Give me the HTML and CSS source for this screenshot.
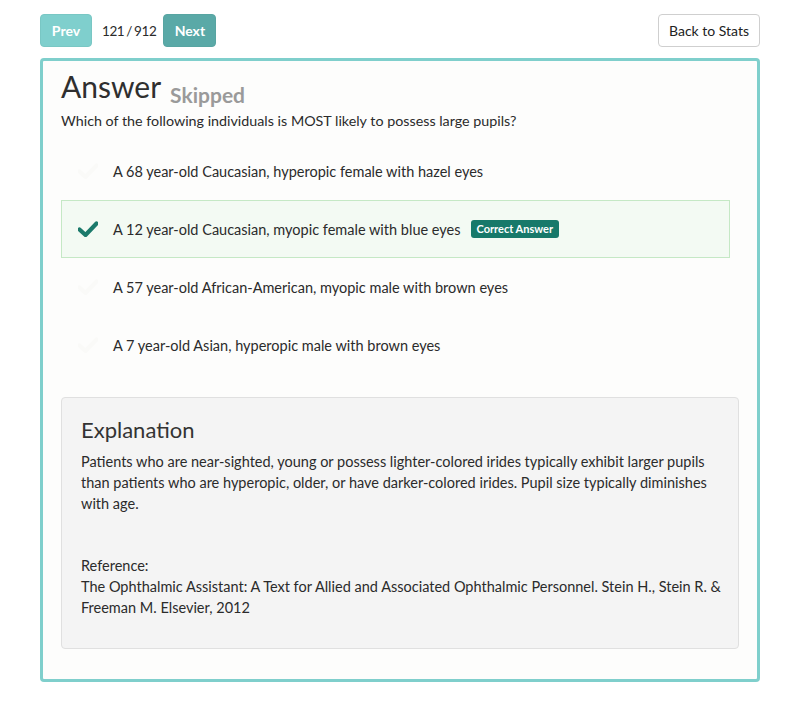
FILE: index.html
```html
<!DOCTYPE html>
<html>
<head>
<meta charset="utf-8">
<link rel="stylesheet" href="styles.css">
</head>
<body>
<div class="page">
  <div class="toolbar">
    <div class="nav">
      <button class="btn btn-teal btn-disabled">Prev</button>
      <span class="counter">121 / 912</span>
      <button class="btn btn-teal">Next</button>
    </div>
    <button class="btn btn-default">Back to Stats</button>
  </div>
  <div class="panel">
    <div class="title-row">
      <h1 class="title">Answer</h1>
      <span class="status">Skipped</span>
    </div>
    <p class="question">Which of the following individuals is MOST likely to possess large pupils?</p>
    <ul class="options">
      <li class="option">
        <svg class="check faint" viewBox="0 0 20 16"><path d="M1.5 8.5 L7.5 14 L18.5 2.5" fill="none" stroke="currentColor" stroke-width="4.2" stroke-linecap="round" stroke-linejoin="round"/></svg>
        <span>A 68 year-old Caucasian, hyperopic female with hazel eyes</span>
      </li>
      <li class="option correct">
        <svg class="check" viewBox="0 0 20 16"><path d="M1.5 8.5 L7.5 14 L18.5 2.5" fill="none" stroke="currentColor" stroke-width="4.2" stroke-linecap="round" stroke-linejoin="round"/></svg>
        <span>A 12 year-old Caucasian, myopic female with blue eyes</span>
        <span class="badge">Correct Answer</span>
      </li>
      <li class="option">
        <svg class="check faint" viewBox="0 0 20 16"><path d="M1.5 8.5 L7.5 14 L18.5 2.5" fill="none" stroke="currentColor" stroke-width="4.2" stroke-linecap="round" stroke-linejoin="round"/></svg>
        <span>A 57 year-old African-American, myopic male with brown eyes</span>
      </li>
      <li class="option">
        <svg class="check faint" viewBox="0 0 20 16"><path d="M1.5 8.5 L7.5 14 L18.5 2.5" fill="none" stroke="currentColor" stroke-width="4.2" stroke-linecap="round" stroke-linejoin="round"/></svg>
        <span>A 7 year-old Asian, hyperopic male with brown eyes</span>
      </li>
    </ul>
    <div class="explanation">
      <h2 class="exp-title">Explanation</h2>
      <p class="exp-text">Patients who are near-sighted, young or possess lighter-colored irides typically exhibit larger pupils than patients who are hyperopic, older, or have darker-colored irides. Pupil size typically diminishes with age.</p>
      <p class="exp-ref">Reference:<br>The Ophthalmic Assistant: A Text for Allied and Associated Ophthalmic Personnel. Stein H., Stein R. &amp; Freeman M. Elsevier, 2012</p>
    </div>
  </div>
</div>
</body>
</html>
```
FILE: styles.css
```css
* { box-sizing: border-box; }
html, body { margin: 0; padding: 0; background: #ffffff; }
body {
  font-family: "Lato", "Open Sans", sans-serif;
  color: #2b2b2b;
  font-size: 14.5px;
}
.page {
  padding: 14px 40px 24px 40px;
}
.toolbar {
  display: flex;
  justify-content: space-between;
  align-items: center;
  height: 33px;
}
.nav {
  display: flex;
  align-items: center;
}
.btn {
  font-family: inherit;
  font-size: 14px;
  height: 33px;
  border-radius: 4px;
  padding: 0 12px;
  cursor: pointer;
}
.btn-teal {
  background: #5aa9a7;
  border: 1px solid #58a5a2;
  color: #fff;
  font-weight: 700;
  width: 53px;
  padding: 0;
}
.btn-disabled {
  background: #7fcfcd;
  border-color: #79c7c4;
  width: 52px;
}
.counter {
  margin: 0 7px 0 10px;
  color: #2b2b2b;
  font-size: 13.5px;
  word-spacing: -1px;
  letter-spacing: -0.4px;
}
.btn-default {
  background: #fff;
  border: 1px solid #cfcfcf;
  color: #222;
  width: 102px;
  padding: 0;
}
.panel {
  margin-top: 11px;
  border: 3px solid #7fcfcc;
  border-radius: 4px;
  background: #fdfdfc;
  padding: 5px 18px 31px 18px;
  height: 624px;
}
.title-row {
  display: flex;
  align-items: baseline;
}
.title {
  margin: 0;
  font-size: 30px;
  font-weight: 400;
  color: #2f2f2f;
  line-height: 40px;
}
.status {
  margin-left: 9px;
  font-size: 21px;
  font-weight: 700;
  color: #9a9a9a;
  position: relative;
  top: 5px;
}
.question {
  margin: 5px 0 0 0;
  line-height: 20px;
  color: #2b2b2b;
  font-size: 14.3px;
}
.options {
  list-style: none;
  margin: 11px 0 0 0;
  padding: 0;
  width: 669px;
}
.option {
  display: flex;
  align-items: center;
  height: 58px;
  padding-left: 16px;
  border: 1px solid transparent;
  color: #2b2b2b;
}
.option.correct {
  background: #f3faf3;
  border-color: #c5e8c5;
}
.check {
  width: 20px;
  height: 16px;
  color: #1b7a6b;
  margin-right: 15px;
  flex: none;
}
.check.faint {
  color: #fafaf8;
}
.badge {
  margin-left: 10px;
  background: #17796a;
  color: #fff;
  font-size: 11px;
  font-weight: 700;
  padding: 2px 6px;
  border-radius: 3px;
  line-height: 14px;
}
.explanation {
  margin-top: 23px;
  background: #f4f4f4;
  border: 1px solid #e0e0e0;
  border-radius: 4px;
  padding: 18px 14px 30px 19px;
  height: 252px;
}
.exp-title {
  margin: 0;
  font-size: 22px;
  font-weight: 400;
  color: #333;
  line-height: 28px;
}
.exp-text {
  margin: 7px 0 0 0;
  line-height: 21px;
  color: #2b2b2b;
}
.exp-ref {
  margin: 41px 0 0 0;
  line-height: 21px;
  color: #2b2b2b;
}
```
